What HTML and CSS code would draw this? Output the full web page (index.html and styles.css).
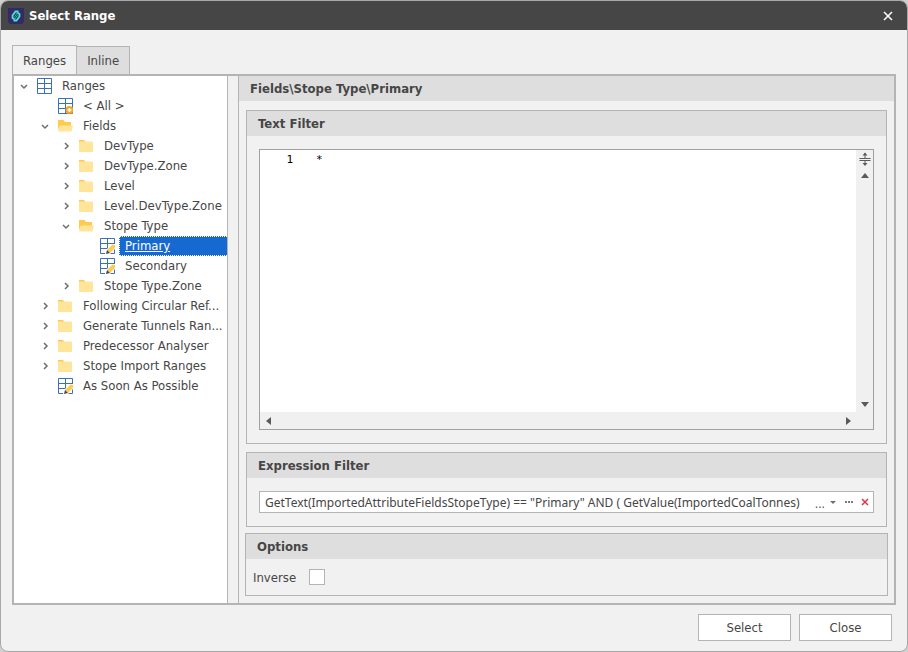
FILE: index.html
```html
<!DOCTYPE html>
<html lang="en">
<head>
  <meta charset="UTF-8" />
  <meta name="viewport" content="width=device-width, initial-scale=1.0"/>
  <title>Select Range</title>
  <link rel="stylesheet" href="styles.css">
</head>
<body>
  <!-- shared icons -->
  <svg class="sprite" aria-hidden="true">
    <symbol id="down" viewBox="0 0 8 8"><path d="M1 3 4 6 7 3" fill="none" stroke="#6e6e6e" stroke-width="1.5"/></symbol>
    <symbol id="right" viewBox="0 0 8 8"><path d="M3 1 6 4 3 7" fill="none" stroke="#6e6e6e" stroke-width="1.5"/></symbol>
    <symbol id="grid" viewBox="0 0 16 16">
      <path d="M1.5 .5h14v15h-14zM8.5 .5v15M1.5 5.5h14M1.5 10.5h14" fill="#fff" stroke="#3a6fc0"/>
    </symbol>
    <symbol id="grid-add" viewBox="0 0 16 16">
      <use href="#grid"/>
      <circle cx="12.5" cy="12" r="4" fill="#faa51e"/>
      <path d="M12.5 10v4M10.500 12h4" stroke="#fff" stroke-width="1.5"/>
    </symbol>
    <symbol id="grid-edit" viewBox="0 0 16 16">
      <use href="#grid"/>
      <path d="M6 16 7 12 13 6h3v5l-5 5z" fill="#fff"/>
      <path d="M8 12 13.500 6.500 16 7v3l-5 5z" fill="#fbce50"/>
      <path d="M8 12 11 15 7 16z" fill="#46464e"/>
    </symbol>
    <symbol id="folder" viewBox="0 0 16 16">
      <path d="M1 2h5l1.500 2H1z" fill="#ffcb4d"/>
      <path d="M1 3.500h13a1 1 0 0 1 1 1V13a1 1 0 0 1-1 1H2a1 1 0 0 1-1-1z" fill="#ffe59a"/>
    </symbol>
    <symbol id="folder-open" viewBox="0 0 16 16">
      <path d="M1 2h5.500L8 4h6v4H3L1 12z" fill="#ffcb4d"/>
      <path d="M3 7.500h13L14.500 13.500H1z" fill="#ffe59a"/>
    </symbol>
  </svg>

  <div class="window">
    <header class="titlebar">
      <svg class="logo" viewBox="0 0 16 16" aria-hidden="true">
        <path d="M0 0h16v14l-2 2H2l-2-2z" fill="#35296a"/>
        <path d="M10.500 3.500H7.500L4.500 7.500v2.500L6 11 9 6.500" fill="none" stroke="#3fe8c8" stroke-width="1.8"/>
        <path d="M5.500 12.500h3l3-4V6L10 5 7 9.500" fill="none" stroke="#3fe8c8" stroke-width="1.8"/>
        <path d="M6.200 10.200 9.800 5.800" stroke="#35296a" stroke-width="1.2"/>
      </svg>
      <h1>Select Range</h1>
      <button class="close" type="button" aria-label="Close window">
        <svg viewBox="0 0 10 10"><path d="M1 1 9 9M9 1 1 9" stroke="#fff" stroke-width="1.5"/></svg>
      </button>
    </header>

    <main>
      <div class="tabs" role="tablist">
        <button class="tab active" type="button" role="tab" aria-selected="true">Ranges</button>
        <button class="tab" type="button" role="tab" aria-selected="false">Inline</button>
      </div>

      <div class="frame">
        <nav class="tree" aria-label="Ranges">
          <ul>
            <li>
              <div class="row"><svg class="arrow"><use href="#down"/></svg><svg class="icon"><use href="#grid"/></svg><a href="#">Ranges</a></div>
              <ul>
                <li><div class="row"><span class="arrow"></span><svg class="icon"><use href="#grid-add"/></svg><a href="#">&lt; All &gt;</a></div></li>
                <li>
                  <div class="row"><svg class="arrow"><use href="#down"/></svg><svg class="icon"><use href="#folder-open"/></svg><a href="#">Fields</a></div>
                  <ul>
                    <li><div class="row"><svg class="arrow"><use href="#right"/></svg><svg class="icon"><use href="#folder"/></svg><a href="#">DevType</a></div></li>
                    <li><div class="row"><svg class="arrow"><use href="#right"/></svg><svg class="icon"><use href="#folder"/></svg><a href="#">DevType.Zone</a></div></li>
                    <li><div class="row"><svg class="arrow"><use href="#right"/></svg><svg class="icon"><use href="#folder"/></svg><a href="#">Level</a></div></li>
                    <li><div class="row"><svg class="arrow"><use href="#right"/></svg><svg class="icon"><use href="#folder"/></svg><a href="#">Level.DevType.Zone</a></div></li>
                    <li>
                      <div class="row"><svg class="arrow"><use href="#down"/></svg><svg class="icon"><use href="#folder-open"/></svg><a href="#">Stope Type</a></div>
                      <ul>
                        <li><div class="row"><span class="arrow"></span><svg class="icon"><use href="#grid-edit"/></svg><a class="selected" href="#">Primary</a></div></li>
                        <li><div class="row"><span class="arrow"></span><svg class="icon"><use href="#grid-edit"/></svg><a href="#">Secondary</a></div></li>
                      </ul>
                    </li>
                    <li><div class="row"><svg class="arrow"><use href="#right"/></svg><svg class="icon"><use href="#folder"/></svg><a href="#">Stope Type.Zone</a></div></li>
                  </ul>
                </li>
                <li><div class="row"><svg class="arrow"><use href="#right"/></svg><svg class="icon"><use href="#folder"/></svg><a href="#">Following Circular Ref...</a></div></li>
                <li><div class="row"><svg class="arrow"><use href="#right"/></svg><svg class="icon"><use href="#folder"/></svg><a href="#">Generate Tunnels Ran...</a></div></li>
                <li><div class="row"><svg class="arrow"><use href="#right"/></svg><svg class="icon"><use href="#folder"/></svg><a href="#">Predecessor Analyser</a></div></li>
                <li><div class="row"><svg class="arrow"><use href="#right"/></svg><svg class="icon"><use href="#folder"/></svg><a href="#">Stope Import Ranges</a></div></li>
                <li><div class="row"><span class="arrow"></span><svg class="icon"><use href="#grid-edit"/></svg><a href="#">As Soon As Possible</a></div></li>
              </ul>
            </li>
          </ul>
        </nav>

        <section class="details">
          <h2>Fields\Stope Type\Primary</h2>
          <div class="groups">
            <section class="group text-filter">
              <h2><label for="textFilter">Text Filter</label></h2>
              <div class="editor">
                <div class="gutter">1</div>
                <textarea id="textFilter" spellcheck="false">*</textarea>
                <div class="scroll-y">
                  <button type="button" aria-label="Split view">
                    <svg class="split" viewBox="0 0 12 14"><path d="M.5 6.500h11M.5 8.500h11M6 1v5M6 9v4" stroke="#5a5a5a"/><path d="M3.500 3.500 6 .5 8.500 3.500zM3.500 11 6 14 8.500 11z" fill="#5a5a5a"/></svg>
                  </button>
                  <button type="button" aria-label="Scroll up"><svg viewBox="0 0 10 10"><path d="M1 7 5 2 9 7z" fill="#5a5a5a"/></svg></button>
                  <button class="scroll-end" type="button" aria-label="Scroll down"><svg viewBox="0 0 10 10"><path d="M1 3 5 8 9 3z" fill="#5a5a5a"/></svg></button>
                </div>
                <div class="scroll-x">
                  <button type="button" aria-label="Scroll left"><svg viewBox="0 0 10 10"><path d="M7 1 2 5 7 9z" fill="#5a5a5a"/></svg></button>
                  <button type="button" aria-label="Scroll right"><svg viewBox="0 0 10 10"><path d="M3 1 8 5 3 9z" fill="#5a5a5a"/></svg></button>
                </div>
              </div>
            </section>

            <section class="group">
              <h2><label for="expression">Expression Filter</label></h2>
              <div class="expression">
                <input type="text" id="expression" value='GetText(ImportedAttributeFieldsStopeType) == "Primary" AND ( GetValue(ImportedCoalTonnes)' />
                <span class="more">...</span>
                <button type="button" aria-label="Open list"><svg viewBox="0 0 10 10"><path d="M2 4h6L5 7z" fill="#6e6e6e"/></svg></button>
                <button type="button" aria-label="Edit expression"><svg viewBox="0 0 10 10"><path d="M1 4h2v2H1zM4 4h2v2H4zM7 4h2v2H7z" fill="#7a7a7a"/></svg></button>
                <button type="button" aria-label="Clear"><svg viewBox="0 0 10 10"><path d="M2 2 8 8M8 2 2 8" stroke="#dc3545" stroke-width="1.5"/></svg></button>
              </div>
            </section>

            <section class="group options">
              <h2>Options</h2>
              <div class="option">
                <label for="inverse">Inverse</label>
                <input type="checkbox" id="inverse" />
              </div>
            </section>
          </div>
        </section>
      </div>
    </main>

    <footer>
      <button type="button">Select</button>
      <button type="button">Close</button>
    </footer>
  </div>
</body>
</html>
```
FILE: styles.css
```css
/* Base Styles */
* {
  box-sizing: border-box;
}

body {
  margin: 0;
  background-color: #d0d0d0;
  color: #464646;
  font-family: "DejaVu Sans Condensed", "DejaVu Sans", sans-serif;
  font-size: 13px;
}

button,
input {
  font: inherit;
  color: inherit;
}

button {
  padding: 0;
  border: 0;
  background: none;
}

h1,
h2 {
  margin: 0;
  font-size: 13px;
  font-weight: bold;
}

ul {
  margin: 0;
  padding: 0;
  list-style: none;
}

.sprite {
  display: none;
}

.window {
  display: flex;
  flex-direction: column;
  height: 100vh;
  border: 1px solid #a8a8a8;
  border-radius: 8px;
  background-color: #f1f1f1;
  overflow: hidden;
}

/* Title bar */
.titlebar {
  display: flex;
  align-items: center;
  gap: 5px;
  height: 29px;
  padding: 0 14px 0 7px;
  background-color: #464646;
  color: #fff;
}

.titlebar h1 {
  flex: 1;
}

.logo {
  width: 16px;
  height: 16px;
}

.close svg {
  display: block;
  width: 10px;
  height: 10px;
}

main {
  flex: 1;
  display: flex;
  flex-direction: column;
  min-height: 0;
  padding: 15px 11px 0;
}

/* Tabs */
.tabs {
  display: flex;
  align-items: flex-end;
}

.tab {
  height: 28px;
  padding: 0 10px;
  border: 1px solid #b4b4b4;
  border-width: 1px 1px 0 0;
  background-color: #dedede;
}

.tab.active {
  height: 29px;
  border-left-width: 1px;
  background-color: #f1f1f1;
}

.frame {
  flex: 1;
  display: flex;
  gap: 10px;
  min-height: 0;
  border: 2px solid #b4b4b4;
}

/* Tree */
.tree {
  width: 214px;
  border-right: 1px solid #b4b4b4;
  background-color: #fff;
  overflow: hidden;
}

.tree ul ul {
  padding-left: 21px;
}

.row {
  display: flex;
  align-items: center;
  height: 20px;
}

.arrow {
  width: 8px;
  height: 8px;
  margin: 0 8px 0 6px;
}

.icon {
  width: 16px;
  height: 16px;
  margin-right: 4px;
}

.row a {
  flex: 1;
  padding-left: 5px;
  border: 1px solid transparent;
  line-height: 18px;
  color: inherit;
  text-decoration: none;
  white-space: nowrap;
}

.row .selected {
  border: 1px dotted #fff;
  border-right: 0;
  background-color: #1669d1;
  color: #fff;
  text-decoration: underline;
}

/* Details */
.details {
  flex: 1;
  display: flex;
  flex-direction: column;
  min-width: 0;
  border-left: 1px solid #b4b4b4;
}

.details h2 {
  padding-left: 11px;
  background-color: #dedede;
  line-height: 25px;
}

.groups {
  flex: 1;
  display: flex;
  flex-direction: column;
  gap: 8px;
  min-height: 0;
  padding: 9px 7px 7px;
}

.group {
  border: 1px solid #b4b4b4;
}

.text-filter {
  flex: 1;
  display: flex;
  flex-direction: column;
  min-height: 0;
}

.editor {
  flex: 1;
  display: grid;
  grid-template: 1fr 17px / 46px 1fr 17px;
  margin: 13px 12px;
  border: 1px solid #a0a0a0;
  background-color: #fff;
}

.gutter,
.editor textarea {
  padding-top: 2px;
  font-family: "DejaVu Sans Mono", monospace;
  font-size: 11px;
  line-height: 15px;
  color: #000;
}

.gutter {
  padding-right: 13px;
  text-align: right;
}

.editor textarea {
  padding-left: 10px;
  border: 0;
  background: none;
  outline: 0;
  resize: none;
}

.editor button svg {
  display: block;
  width: 10px;
  height: 10px;
  margin: auto;
}

.editor button .split {
  width: 12px;
  height: 14px;
}

.scroll-y {
  display: flex;
  flex-direction: column;
  background-color: #f0f0f0;
}

.scroll-y button {
  height: 17px;
}

.scroll-y .scroll-end {
  margin-top: auto;
}

.scroll-x {
  grid-column: 1 / -1;
  display: flex;
  justify-content: space-between;
  padding-right: 17px;
  background-color: #f0f0f0;
}

.scroll-x button {
  width: 17px;
}

.expression {
  display: flex;
  align-items: center;
  height: 22px;
  margin: 13px 12px;
  border: 1px solid #b4b4b4;
  background-color: #fff;
}

.expression input {
  flex: 1;
  min-width: 0;
  padding: 0 0 0 5px;
  border: 0;
  background: none;
  outline: 0;
  font-family: "Noto Sans", sans-serif;
  font-size: 12px;
}

.more {
  font-size: 12px;
  line-height: 12px;
  padding-top: 4px;
}

.expression button {
  width: 16px;
}

.expression svg {
  display: block;
  width: 10px;
  height: 10px;
  margin: auto;
}

.options {
  margin: -2px -1px 0;
}

.option {
  display: flex;
  align-items: center;
  gap: 13px;
  padding: 10px 7px;
}

.option input {
  appearance: none;
  width: 16px;
  height: 16px;
  margin: 0;
  border: 1px solid #b4b4b4;
  background-color: #fff;
}

/* Footer */
footer {
  display: flex;
  justify-content: flex-end;
  gap: 8px;
  padding: 9px 15px 10px;
}

footer button {
  width: 93px;
  height: 27px;
  border: 1px solid #b4b4b4;
  background-color: #fff;
}
```
